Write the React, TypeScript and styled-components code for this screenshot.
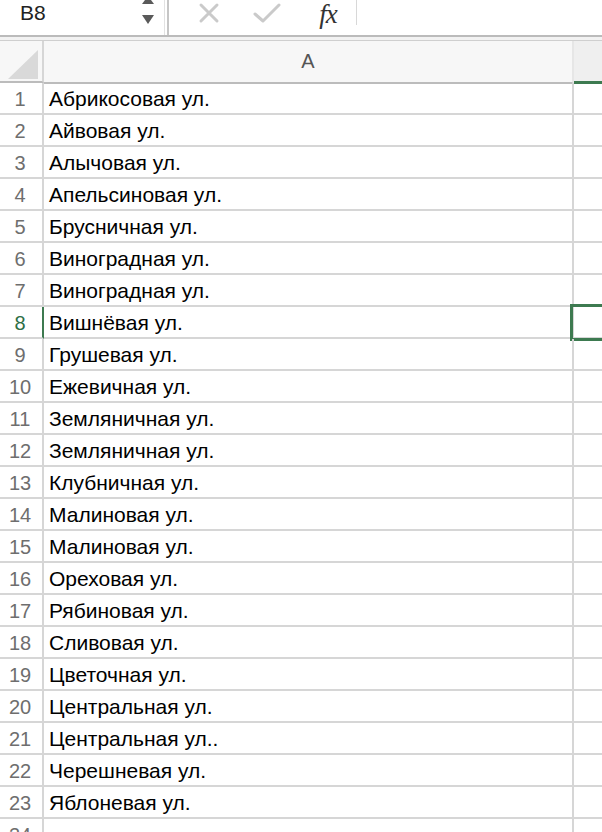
import React from "react";
import styled, { createGlobalStyle } from "styled-components";

const Global = createGlobalStyle`
  html, body { margin: 0; padding: 0; background: #fff; }
  body { width: 602px; height: 832px; overflow: hidden; font-family: "Liberation Sans", Arial, sans-serif; }
`;

const GREEN = "#3d7a50";
const GRID = "#d6d6d6";

const Page = styled.div`
  width: 602px;
  height: 832px;
  overflow: hidden;
  background: #fff;
`;

const Toolbar = styled.div`
  height: 35px;
  display: flex;
  align-items: flex-start;
  border-bottom: 2px solid #bbbbbb;
  background: #fff;
`;

const NameBox = styled.div`
  width: 165px;
  height: 35px;
  display: flex;
  align-items: flex-start;
  justify-content: space-between;
  box-sizing: border-box;
  padding-left: 20px;
  padding-right: 9px;
  border-right: 1px solid #e2e2e2;
`;

const NameText = styled.span`
  font-size: 21px;
  line-height: 26px;
  color: #222;
`;

const Spinner = styled.div`
  width: 14px;
  height: 26px;
`;

const Divider = styled.div`
  width: 2px;
  height: 35px;
  background: #c6c6c6;
  margin-left: 2px;
`;

const IconSlot = styled.div<{ $w: number; $ml: number }>`
  width: ${(p) => p.$w}px;
  height: 26px;
  margin-left: ${(p) => p.$ml}px;
  display: flex;
  align-items: center;
  justify-content: center;
`;

const Fx = styled.span`
  font-family: "Liberation Serif", "Times New Roman", serif;
  font-style: italic;
  font-size: 27px;
  line-height: 27px;
  padding-top: 3px;
  color: #333;
  letter-spacing: -1px;
`;

const ThinDivider = styled.div`
  width: 1px;
  height: 25px;
  background: #d8d8d8;
  margin-left: 12px;
`;

const Band = styled.div`
  height: 3px;
  background: #f2f2f2;
  border-bottom: 1px solid #cfcfcf;
`;

const HeaderRow = styled.div`
  display: flex;
  height: 42px;
  background: #f7f7f7;
`;

const Corner = styled.div`
  width: 42px;
  border-right: 2px solid ${GRID};
  border-bottom: 2px solid #bcbcbc;
  position: relative;
`;

const CornerTriangle = styled.div`
  position: absolute;
  left: 8px;
  top: 9px;
  width: 0;
  height: 0;
  border-left: 30px solid transparent;
  border-bottom: 29px solid #d9d9d9;
`;

const ColHeader = styled.div<{ $selected?: boolean; $w?: number }>`
  ${(p) => (p.$w ? `width: ${p.$w}px;` : "flex: 1;")}
  display: flex;
  align-items: center;
  justify-content: center;
  font-size: 20px;
  color: #555;
  background: ${(p) => (p.$selected ? "#efefef" : "#f7f7f7")};
  border-right: ${(p) => (p.$selected ? "none" : "2px solid #e6e6e6")};
  border-bottom: ${(p) => (p.$selected ? `3px solid ${GREEN}` : "2px solid #bcbcbc")};
  box-sizing: content-box;
  height: ${(p) => (p.$selected ? 40 : 41)}px;
`;

const Row = styled.div`
  display: flex;
  height: 32px;
`;

const RowHeader = styled.div<{ $active?: boolean }>`
  width: 40px;
  padding-right: 2px;
  padding-top: 2px;
  border-right: 2px solid ${(p) => (p.$active ? GREEN : GRID)};
  border-bottom: 2px solid ${GRID};
  display: flex;
  align-items: center;
  justify-content: center;
  font-size: 20px;
  color: ${(p) => (p.$active ? "#2e6e45" : "#6e6e6e")};
  height: 28px;
`;

const Cell = styled.div<{ $w?: number }>`
  ${(p) => (p.$w ? `width: ${p.$w}px;` : "flex: 1;")}
  height: 28px;
  padding-top: 2px;
  border-right: ${(p) => (p.$w ? `2px solid ${GRID}` : "none")};
  border-bottom: 2px solid ${GRID};
  display: flex;
  align-items: center;
  padding-left: 5px;
  box-sizing: content-box;
  font-size: 21px;
  color: #000;
  white-space: nowrap;
  position: relative;
`;

const Selection = styled.div`
  position: absolute;
  left: -4px;
  top: -3px;
  width: 60px;
  height: 31px;
  border: 3px solid ${GREEN};
`;

const streets = [
  "Абрикосовая ул.",
  "Айвовая ул.",
  "Алычовая ул.",
  "Апельсиновая ул.",
  "Брусничная ул.",
  "Виноградная ул.",
  "Виноградная ул.",
  "Вишнёвая ул.",
  "Грушевая ул.",
  "Ежевичная ул.",
  "Земляничная ул.",
  "Земляничная ул.",
  "Клубничная ул.",
  "Малиновая ул.",
  "Малиновая ул.",
  "Ореховая ул.",
  "Рябиновая ул.",
  "Сливовая ул.",
  "Цветочная ул.",
  "Центральная ул.",
  "Центральная ул..",
  "Черешневая ул.",
  "Яблоневая ул.",
  "",
];

export default function App() {
  return (
    <Page>
      <Global />
      <Toolbar>
        <NameBox>
          <NameText>B8</NameText>
          <Spinner>
            <svg width="14" height="26" viewBox="0 0 14 26">
              <polygon points="1,4 13,4 7,-4" fill="#5a5a5a" />
              <polygon points="1,15 13,15 7,24" fill="#5a5a5a" />
            </svg>
          </Spinner>
        </NameBox>
        <Divider />
        <IconSlot $w={24} $ml={28}>
          <svg width="22" height="22" viewBox="0 0 22 22">
            <path d="M3 3 L19 19 M19 3 L3 19" stroke="#cacaca" strokeWidth="3" strokeLinecap="round" />
          </svg>
        </IconSlot>
        <IconSlot $w={30} $ml={31}>
          <svg width="28" height="22" viewBox="0 0 28 22">
            <path d="M2 12 L10 19 L26 3" stroke="#cacaca" strokeWidth="3" fill="none" strokeLinecap="round" strokeLinejoin="round" />
          </svg>
        </IconSlot>
        <IconSlot $w={32} $ml={30}>
          <Fx>fx</Fx>
        </IconSlot>
        <ThinDivider />
      </Toolbar>
      <Band />
      <HeaderRow>
        <Corner>
          <CornerTriangle />
        </Corner>
        <ColHeader $w={528}>A</ColHeader>
        <ColHeader $selected />
      </HeaderRow>
      {streets.map((s, i) => {
        const active = i === 7;
        return (
          <Row key={i}>
            <RowHeader $active={active}>{i + 1}</RowHeader>
            <Cell $w={523}>{s}</Cell>
            <Cell>{active && <Selection />}</Cell>
          </Row>
        );
      })}
    </Page>
  );
}
